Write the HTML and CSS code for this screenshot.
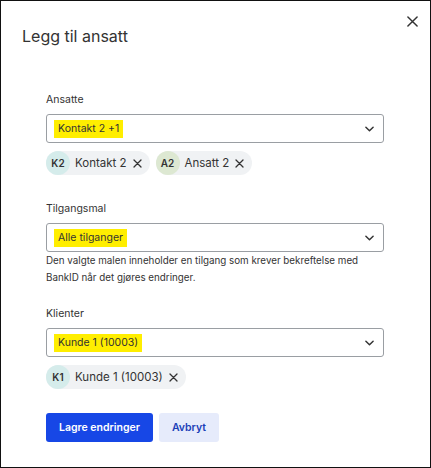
FILE: index.html
```html
<!DOCTYPE html>
<html>
<head>
<meta charset="UTF-8">
<title>Legg til ansatt</title>
<link rel="stylesheet" href="styles.css">
</head>
<body>
<div class="dialog">
	<div class="close">
		<svg width="11" height="11" viewBox="0 0 12 12"><path d="M1 1L11 11M11 1L1 11" stroke="#333" stroke-width="1.6" stroke-linecap="round"/></svg>
	</div>
	<h1 class="title">Legg til ansatt</h1>

	<div class="field">
		<div class="label">Ansatte</div>
		<div class="select">
			<span class="mark">Kontakt 2 +1</span>
			<svg class="chev" width="9" height="6" viewBox="0 0 10 6"><path d="M1 1L5 5L9 1" fill="none" stroke="#333" stroke-width="1.6" stroke-linecap="round" stroke-linejoin="round"/></svg>
		</div>
		<div class="chips">
			<span class="chip"><span class="avatar teal">K2</span>Kontakt 2<svg class="x" width="9" height="9" viewBox="0 0 9 9"><path d="M1 1L8 8M8 1L1 8" stroke="#333" stroke-width="1.3" stroke-linecap="round"/></svg></span>
			<span class="chip"><span class="avatar green">A2</span>Ansatt 2<svg class="x" width="9" height="9" viewBox="0 0 9 9"><path d="M1 1L8 8M8 1L1 8" stroke="#333" stroke-width="1.3" stroke-linecap="round"/></svg></span>
		</div>
	</div>

	<div class="field">
		<div class="label">Tilgangsmal</div>
		<div class="select">
			<span class="mark">Alle tilganger</span>
			<svg class="chev" width="9" height="6" viewBox="0 0 10 6"><path d="M1 1L5 5L9 1" fill="none" stroke="#333" stroke-width="1.6" stroke-linecap="round" stroke-linejoin="round"/></svg>
		</div>
		<p class="help">Den valgte malen inneholder en tilgang som krever bekreftelse med BankID når det gjøres endringer.</p>
	</div>

	<div class="field">
		<div class="label">Klienter</div>
		<div class="select">
			<span class="mark">Kunde 1 (10003)</span>
			<svg class="chev" width="9" height="6" viewBox="0 0 10 6"><path d="M1 1L5 5L9 1" fill="none" stroke="#333" stroke-width="1.6" stroke-linecap="round" stroke-linejoin="round"/></svg>
		</div>
		<div class="chips">
			<span class="chip"><span class="avatar teal">K1</span>Kunde 1 (10003)<svg class="x" width="9" height="9" viewBox="0 0 9 9"><path d="M1 1L8 8M8 1L1 8" stroke="#333" stroke-width="1.3" stroke-linecap="round"/></svg></span>
		</div>
	</div>

	<div class="buttons">
		<button class="btn primary">Lagre endringer</button>
		<button class="btn secondary">Avbryt</button>
	</div>
</div>
</body>
</html>
```

FILE: styles.css
```css
html, body {
  margin: 0;
  padding: 0;
}

body {
  font-family: Inter, "Noto Sans", sans-serif;
  color: #2b2b2b;
  background: #fff;
}

.dialog {
  box-sizing: border-box;
  width: 431px;
  height: 468px;
  border: 1px solid #111;
  padding: 25px 46px 0 45px;
  position: relative;
}

.close {
  position: absolute;
  top: 10px;
  right: 12px;
}

.title {
  margin: 0 0 0 -24px;
  font-size: 16px;
  font-weight: 400;
  line-height: 20px;
  color: #333;
}

.field {
  margin-top: 47px;
}

.field + .field {
  margin-top: 21px;
}

.label {
  font-size: 10.5px;
  color: #333;
  line-height: 14px;
  margin-bottom: 7px;
}

.select {
  box-sizing: border-box;
  height: 29px;
  border: 1px solid #9a9ea3;
  border-radius: 3px;
  display: flex;
  align-items: center;
  justify-content: space-between;
  padding: 0 9px 0 7px;
}

.mark {
  background: #ffee00;
  font-size: 10.5px;
  line-height: 18px;
  padding: 0 4px;
  color: #333;
}

.chips {
  display: flex;
  gap: 6px;
  margin-top: 8px;
  padding-bottom: 6px;
}

.chip {
  display: inline-flex;
  align-items: center;
  background: #f0f2f4;
  border-radius: 12px;
  height: 24px;
  padding-right: 8px;
  font-size: 11.5px;
  color: #333;
}

.avatar {
  width: 24px;
  height: 24px;
  border-radius: 50%;
  display: inline-flex;
  align-items: center;
  justify-content: center;
  font-size: 10px;
  font-weight: 600;
  margin-right: 5px;
  color: #333;
}

.teal {
  background: #d5eceb;
}

.green {
  background: #dde8d2;
}

.x {
  margin-left: 6px;
}

.help {
  margin: 0;
  font-size: 9.8px;
  line-height: 17px;
  color: #333;
}

.buttons {
  display: flex;
  gap: 6px;
  margin-top: 18px;
}

.btn {
  font-family: Inter, "Noto Sans", sans-serif;
  border: none;
  height: 29px;
  border-radius: 3px;
  font-size: 10.5px;
  font-weight: 600;
  padding: 0 13px;
}

.primary {
  background: #1747e6;
  color: #fff;
}

.secondary {
  background: #e6ebfb;
  color: #1b3fb8;
}
```
